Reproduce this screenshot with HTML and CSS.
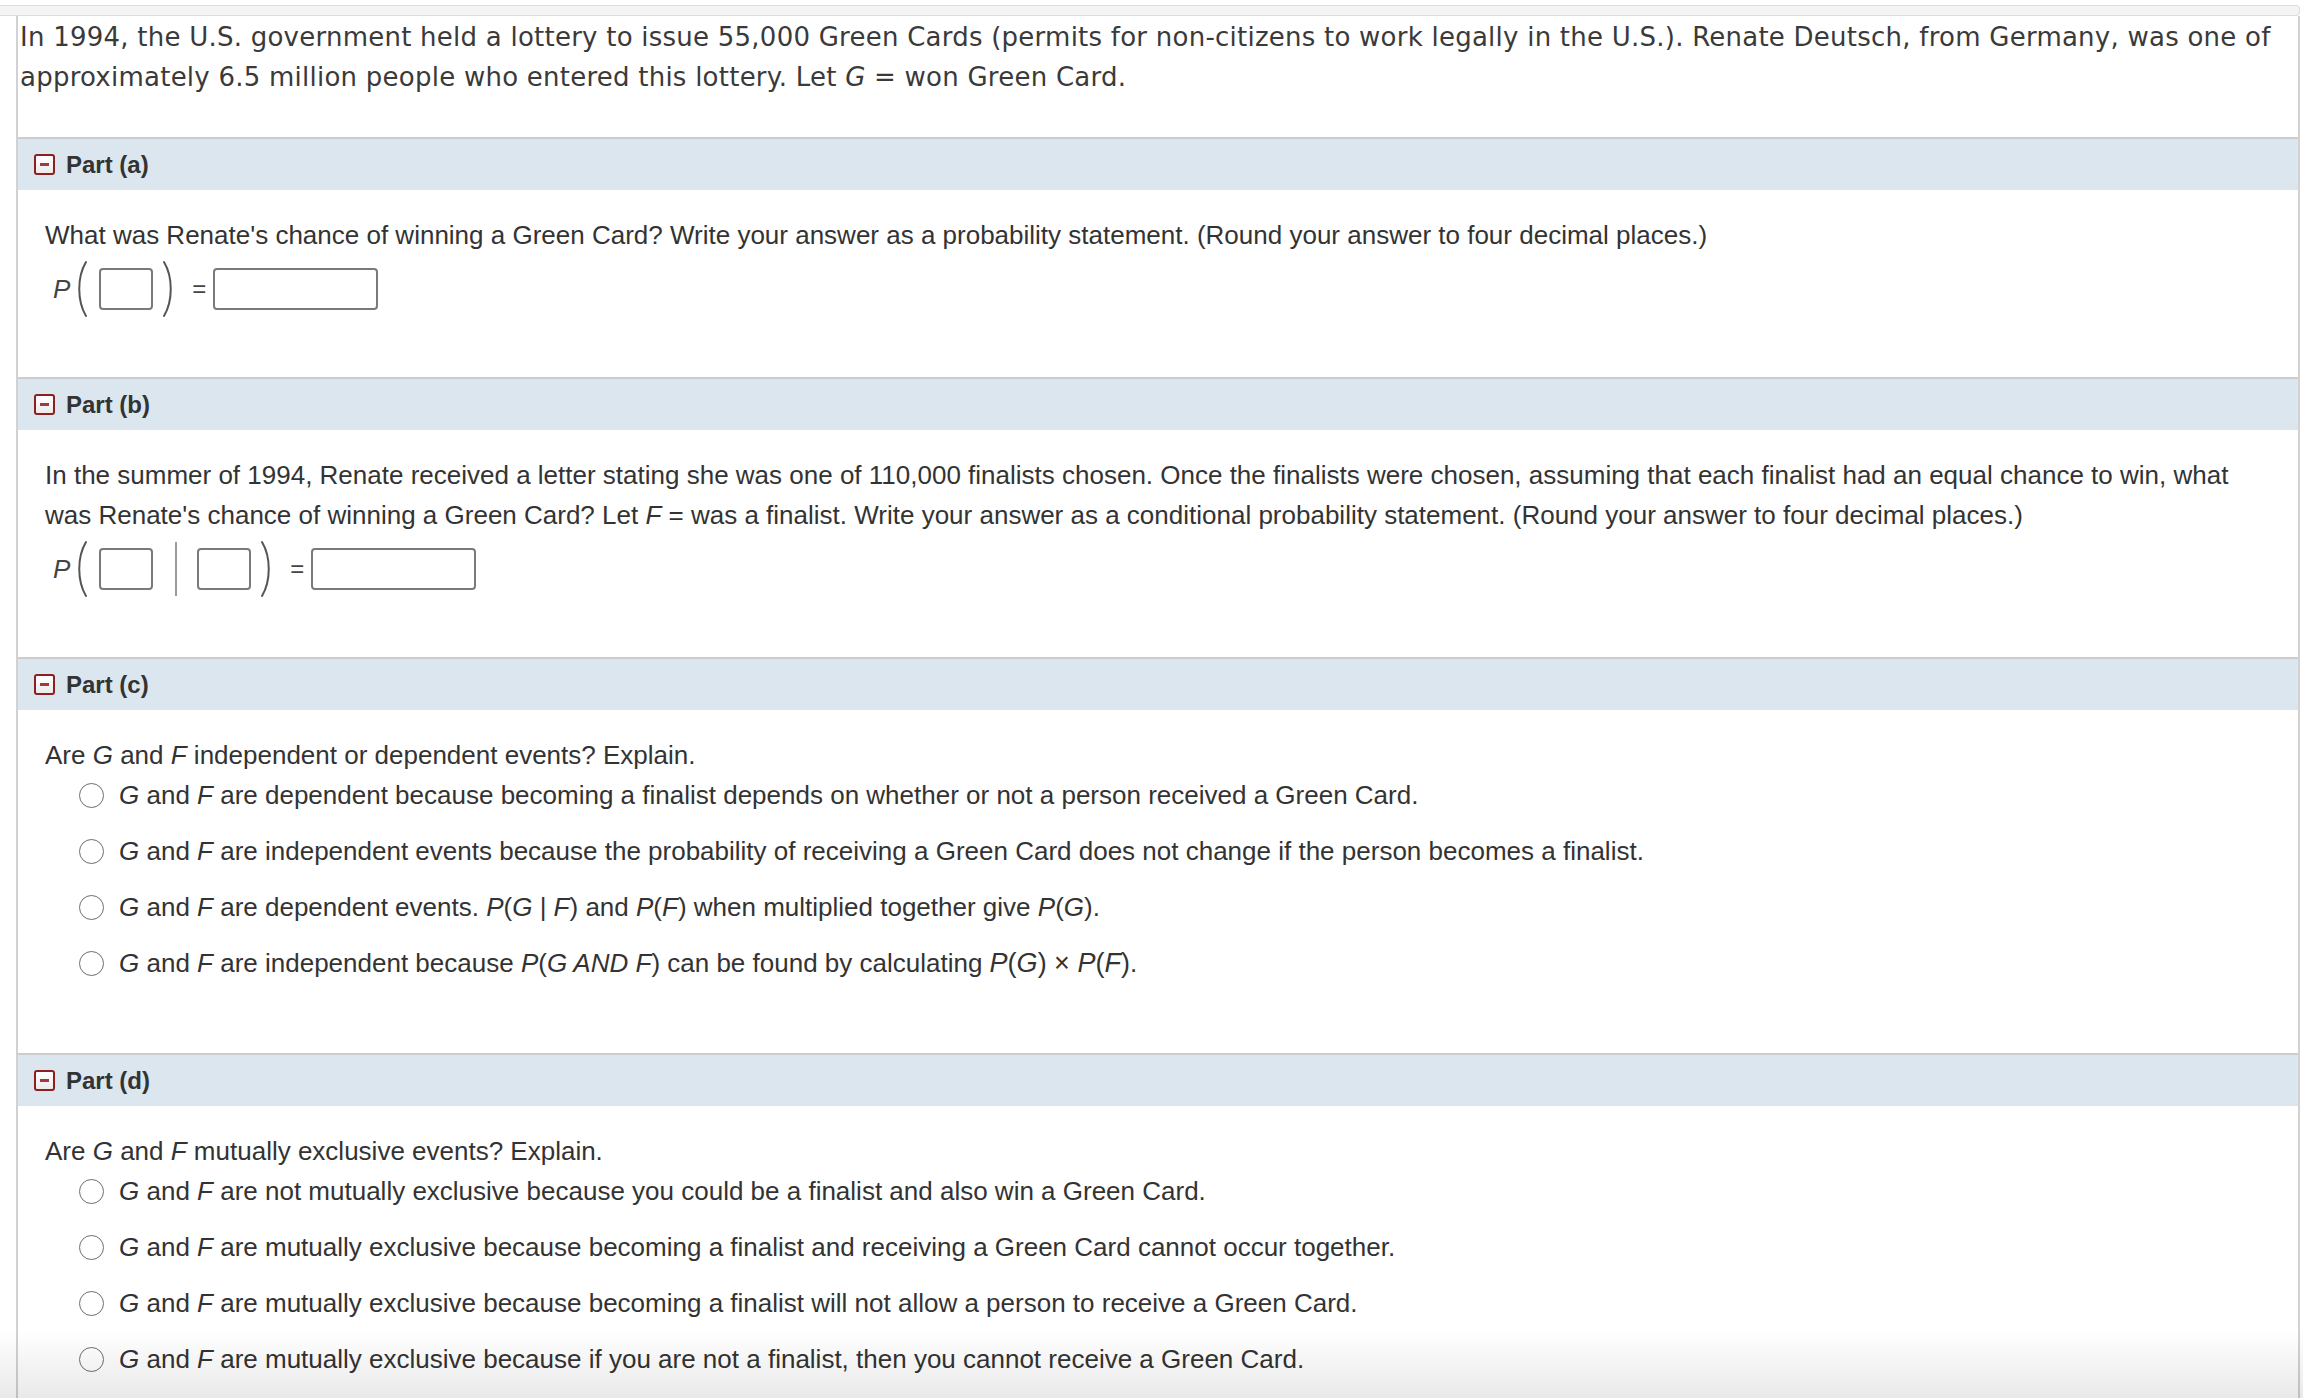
FILE: index.html
```html
<!DOCTYPE html>
<html lang="en">
<head>
<meta charset="utf-8">
<title>Green Card Lottery</title>
<link rel="stylesheet" href="styles.css">
</head>
<body>
<div class="topbar"></div>
<div class="sheet">
  <p class="intro">In 1994, the U.S. government held a lottery to issue 55,000 Green Cards (permits for non-citizens to work legally in the U.S.). Renate Deutsch, from Germany, was one of approximately 6.5 million people who entered this lottery. Let <i>G</i> = won Green Card.</p>

  <section class="part">
    <div class="part-head"><span class="toggle"></span><span class="part-title">Part (a)</span></div>
    <div class="part-body">
      <p class="q">What was Renate's chance of winning a Green Card? Write your answer as a probability statement. (Round your answer to four decimal places.)</p>
      <div class="expr">
        <span class="pvar">P</span>
        <svg class="paren" viewBox="0 0 14 58" width="14" height="58"><path d="M11 2 C2 17 2 41 11 56"/></svg>
        <span class="box small"></span>
        <svg class="paren close" viewBox="0 0 14 58" width="14" height="58"><path d="M3 2 C12 17 12 41 3 56"/></svg>
        <span class="eq">=</span>
        <span class="box wide"></span>
      </div>
    </div>
  </section>

  <section class="part">
    <div class="part-head"><span class="toggle"></span><span class="part-title">Part (b)</span></div>
    <div class="part-body">
      <p class="q">In the summer of 1994, Renate received a letter stating she was one of 110,000 finalists chosen. Once the finalists were chosen, assuming that each finalist had an equal chance to win, what was Renate's chance of winning a Green Card? Let <i>F</i> = was a finalist. Write your answer as a conditional probability statement. (Round your answer to four decimal places.)</p>
      <div class="expr">
        <span class="pvar">P</span>
        <svg class="paren" viewBox="0 0 14 58" width="14" height="58"><path d="M11 2 C2 17 2 41 11 56"/></svg>
        <span class="box small"></span>
        <span class="bar"></span>
        <span class="box small"></span>
        <svg class="paren close" viewBox="0 0 14 58" width="14" height="58"><path d="M3 2 C12 17 12 41 3 56"/></svg>
        <span class="eq">=</span>
        <span class="box wide"></span>
      </div>
    </div>
  </section>

  <section class="part">
    <div class="part-head"><span class="toggle"></span><span class="part-title">Part (c)</span></div>
    <div class="part-body">
      <p class="q">Are <i>G</i> and <i>F</i> independent or dependent events? Explain.</p>
      <ul class="options">
        <li><span class="radio"></span><span><i>G</i> and <i>F</i> are dependent because becoming a finalist depends on whether or not a person received a Green Card.</span></li>
        <li><span class="radio"></span><span><i>G</i> and <i>F</i> are independent events because the probability of receiving a Green Card does not change if the person becomes a finalist.</span></li>
        <li><span class="radio"></span><span><i>G</i> and <i>F</i> are dependent events. <i>P</i>(<i>G</i> | <i>F</i>) and <i>P</i>(<i>F</i>) when multiplied together give <i>P</i>(<i>G</i>).</span></li>
        <li><span class="radio"></span><span><i>G</i> and <i>F</i> are independent because <i>P</i>(<i>G AND F</i>) can be found by calculating <span class="math"><i>P</i>(<i>G</i>) × <i>P</i>(<i>F</i>)</span>.</span></li>
      </ul>
    </div>
  </section>

  <section class="part">
    <div class="part-head"><span class="toggle"></span><span class="part-title">Part (d)</span></div>
    <div class="part-body">
      <p class="q">Are <i>G</i> and <i>F</i> mutually exclusive events? Explain.</p>
      <ul class="options">
        <li><span class="radio"></span><span><i>G</i> and <i>F</i> are not mutually exclusive because you could be a finalist and also win a Green Card.</span></li>
        <li><span class="radio"></span><span><i>G</i> and <i>F</i> are mutually exclusive because becoming a finalist and receiving a Green Card cannot occur together.</span></li>
        <li><span class="radio"></span><span><i>G</i> and <i>F</i> are mutually exclusive because becoming a finalist will not allow a person to receive a Green Card.</span></li>
        <li><span class="radio"></span><span><i>G</i> and <i>F</i> are mutually exclusive because if you are not a finalist, then you cannot receive a Green Card.</span></li>
      </ul>
    </div>
  </section>
</div>
<div class="fade"></div>
</body>
</html>
```

FILE: styles.css
```css
html, body {
  margin: 0;
  padding: 0;
  background: #ffffff;
}

body {
  font-family: "Liberation Sans", Arial, sans-serif;
  color: #333333;
  overflow: hidden;
}

.topbar {
  margin: 5px 3px 0 0;
  height: 9px;
  border: 1px solid #dddddd;
  border-left: none;
  border-radius: 0 4px 4px 0;
  background: #f4f4f4;
}

.sheet {
  margin: 0 3px 0 16px;
  border-left: 2px solid #d2d2d2;
  border-right: 2px solid #d2d2d2;
  min-height: 1400px;
}

.intro {
  margin: 0;
  padding: 1px 10px 40px 2px;
  font-family: "DejaVu Sans", Verdana, sans-serif;
  font-size: 26px;
  letter-spacing: 0.24px;
  line-height: 40px;
  color: #3a3a3a;
}

.part-head {
  display: flex;
  align-items: center;
  height: 51px;
  border-top: 2px solid #cccccc;
  background: #dce6ef;
  padding-left: 16px;
}

.toggle {
  position: relative;
  width: 17px;
  height: 17px;
  border: 2px solid #8e1f1f;
  border-radius: 3px;
  background: linear-gradient(#ffffff, #ececec);
  margin-right: 11px;
}

.toggle::after {
  content: "";
  position: absolute;
  left: 4px;
  top: 7px;
  width: 9px;
  height: 3px;
  background: #a33a3a;
}

.part-title {
  font-weight: bold;
  font-size: 24px;
  color: #333333;
}

.part-body {
  padding: 25px 45px 60px 27px;
}

.q {
  margin: 0;
  font-size: 26px;
  line-height: 40px;
}

.expr {
  display: flex;
  align-items: center;
  height: 56px;
  margin-top: 6px;
  font-size: 24px;
}

.pvar {
  font-style: italic;
  font-size: 26px;
  margin-left: 8px;
  color: #444444;
}

.paren {
  margin-left: 5px;
}

.paren path {
  fill: none;
  stroke: #555555;
  stroke-width: 2;
  stroke-linecap: round;
}

.paren.close {
  margin-left: 8px;
}

.box {
  box-sizing: border-box;
  height: 42px;
  border: 2px solid #7a7a7a;
  border-radius: 4px;
  background: #ffffff;
}

.box.small {
  width: 54px;
  margin-left: 10px;
}

.box.wide {
  width: 165px;
  margin-left: 7px;
}

.bar {
  width: 2px;
  height: 54px;
  background: #9a9a9a;
  margin: 0 20px 0 22px;
}

.bar + .box.small {
  margin-left: 0;
}

.eq {
  margin-left: 17px;
  color: #444444;
}

.options {
  list-style: none;
  margin: 0 0 10px 0;
  padding: 0;
  display: flex;
  flex-direction: column;
  gap: 16px;
  font-size: 26px;
}

.options li {
  display: flex;
  align-items: center;
  height: 40px;
}

.radio {
  box-sizing: border-box;
  width: 25px;
  height: 25px;
  border: 1.5px solid #6e6e6e;
  border-radius: 50%;
  background: #ffffff;
  margin: 0 15px 0 34px;
  flex: none;
}

.math {
  font-size: 27px;
}

.fade {
  position: fixed;
  left: 0;
  right: 0;
  bottom: 0;
  height: 68px;
  background: linear-gradient(rgba(0,0,0,0), rgba(0,0,0,0.085));
  pointer-events: none;
}
```
